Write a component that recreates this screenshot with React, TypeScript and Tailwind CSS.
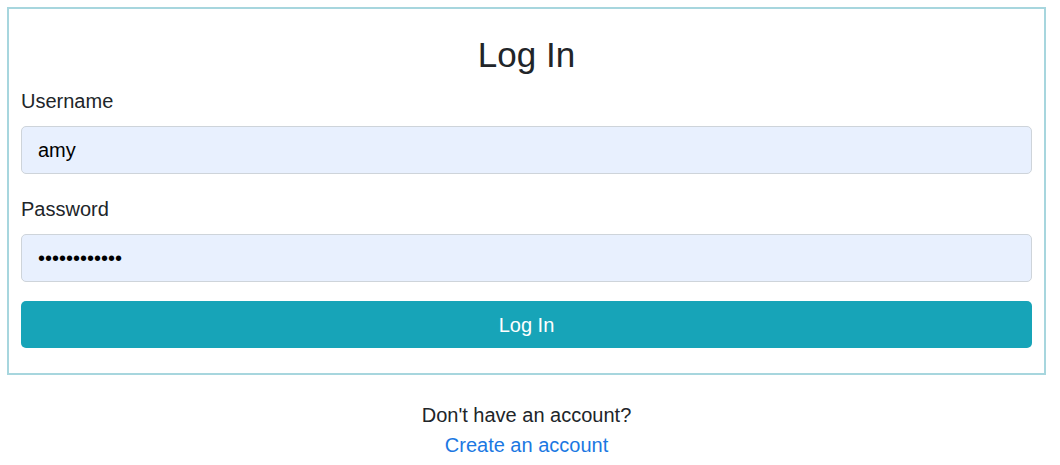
import React from "react";

export default function App() {
  const font = { fontFamily: '"Liberation Sans", Arial, sans-serif' };
  return (
    <div className="bg-white w-[1060px] h-[465px] pt-[7px] pl-[7px] text-[#212529]" style={font}>
      <div className="w-[1039px] border-2 border-[#a7d6de] px-3 pt-[25px] pb-[25px]">
        <h2 className="text-center text-[35px] leading-[41px] font-normal mb-[9px]">Log In</h2>
        <label className="block text-[20px] leading-[30px] pt-[2px] mb-[10px]">Username</label>
        <input
          readOnly
          defaultValue="amy"
          className="block w-full h-12 rounded-[5px] border border-[#ced4da] bg-[#e8f0fe] px-4 text-[20px] text-black outline-none"
          style={font}
        />
        <label className="block text-[20px] leading-[30px] mt-[18px] pt-[2px] mb-[10px]">Password</label>
        <input
          readOnly
          type="password"
          defaultValue="amypassword1"
          className="block w-full h-12 rounded-[5px] border border-[#ced4da] bg-[#e8f0fe] px-4 text-[20px] text-black outline-none"
          style={font}
        />
        <button
          className="block w-full h-[47px] mt-[19px] rounded-[5px] bg-[#17a4b8] text-white text-[20px]"
          style={font}
        >
          Log In
        </button>
      </div>
      <div className="w-[1039px] mt-[25px] text-center text-[20px] leading-[30px]">
        <div>Don't have an account?</div>
        <a href="#" className="text-[#1b78e2]">Create an account</a>
      </div>
    </div>
  );
}
